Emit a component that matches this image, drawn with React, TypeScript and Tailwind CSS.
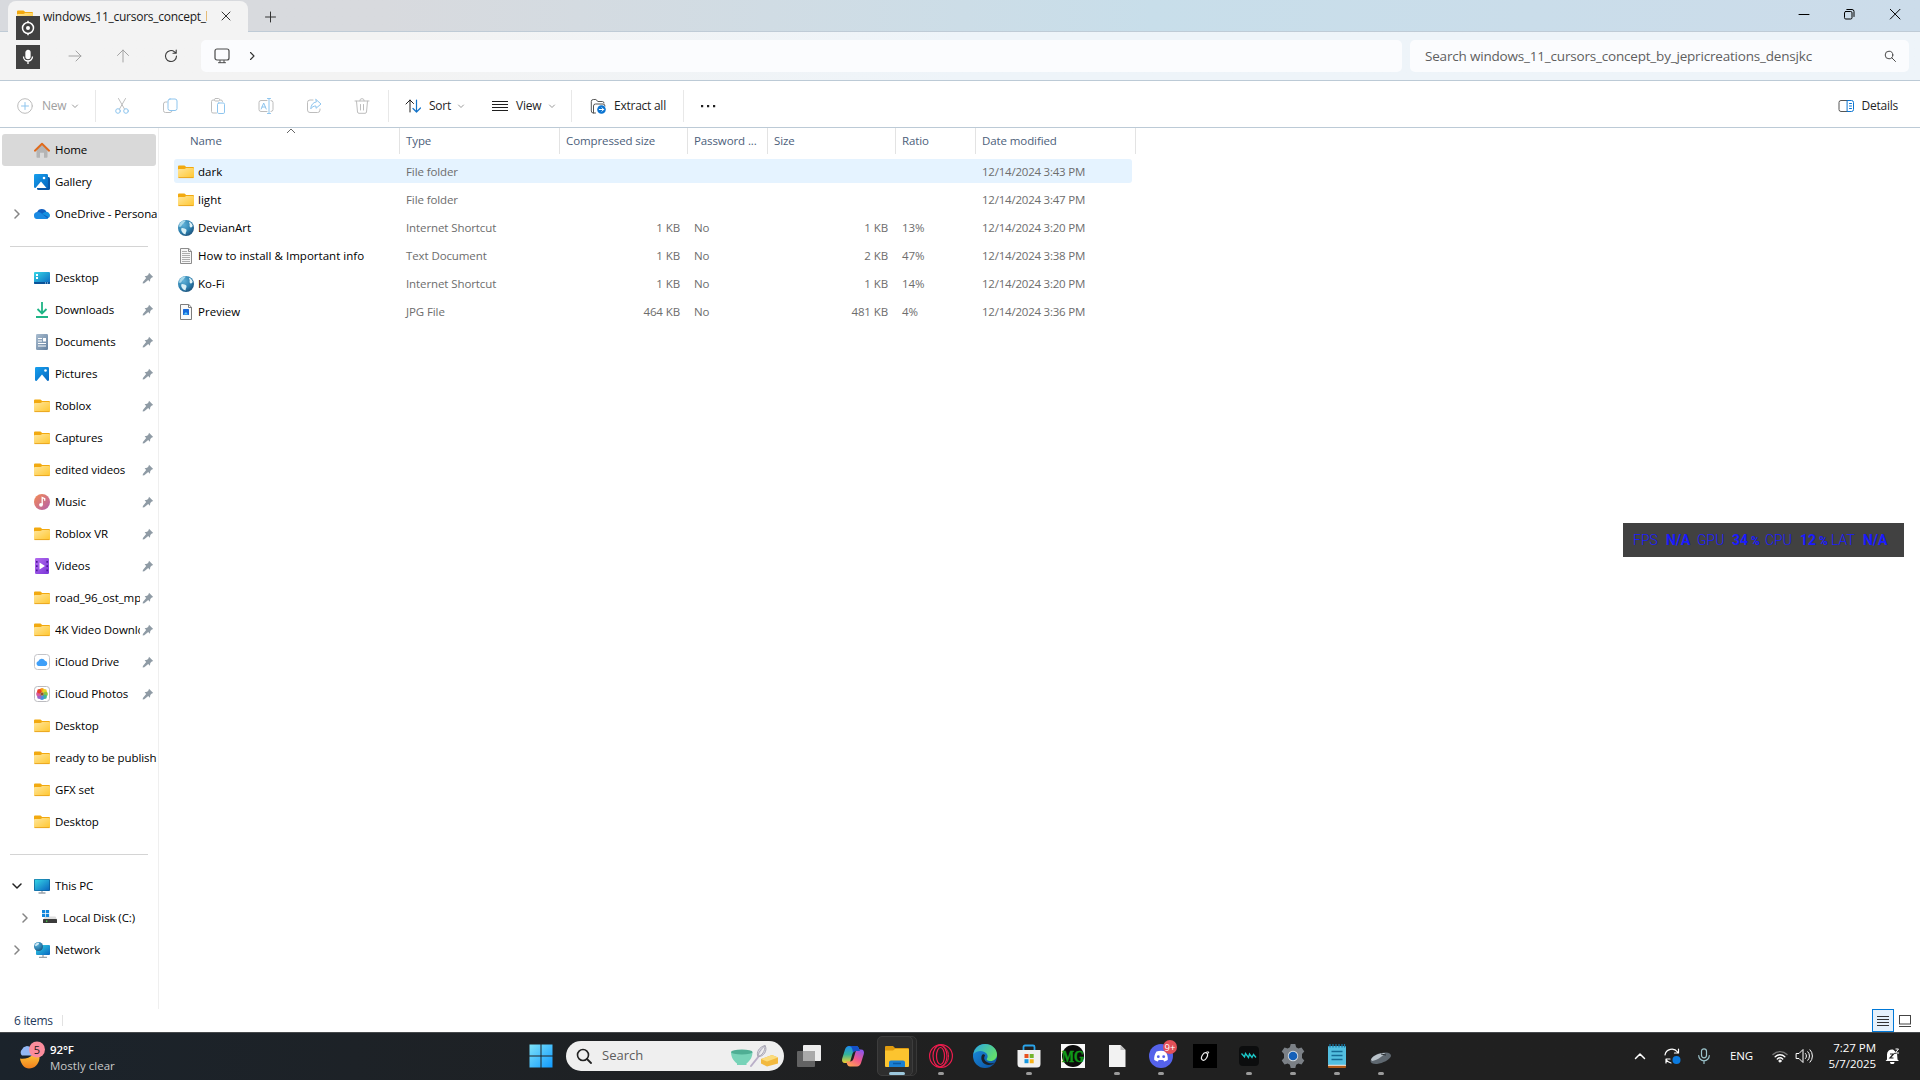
import type { ReactNode } from 'react'
import clsx from 'clsx'

type IconName =
  | 'home' | 'gallery' | 'onedrive' | 'desktop' | 'downloads' | 'documents' | 'pictures' | 'folder'
  | 'music' | 'videos' | 'icloud' | 'photos' | 'pc' | 'disk' | 'network' | 'globe' | 'text' | 'jpg'

interface NavItem {
  label: string
  icon: IconName
  pinned?: boolean
  chevron?: 'right' | 'down'
  nested?: boolean
  active?: boolean
}

interface FileItem {
  name: string
  icon: IconName
  type: string
  packed?: string
  password?: string
  size?: string
  ratio?: string
  date: string
}

const topItems: NavItem[] = [
  { label: 'Home', icon: 'home', active: true },
  { label: 'Gallery', icon: 'gallery' },
  { label: 'OneDrive - Persona', icon: 'onedrive', chevron: 'right' },
]

const quickItems: NavItem[] = [
  { label: 'Desktop', icon: 'desktop', pinned: true },
  { label: 'Downloads', icon: 'downloads', pinned: true },
  { label: 'Documents', icon: 'documents', pinned: true },
  { label: 'Pictures', icon: 'pictures', pinned: true },
  { label: 'Roblox', icon: 'folder', pinned: true },
  { label: 'Captures', icon: 'folder', pinned: true },
  { label: 'edited videos', icon: 'folder', pinned: true },
  { label: 'Music', icon: 'music', pinned: true },
  { label: 'Roblox VR', icon: 'folder', pinned: true },
  { label: 'Videos', icon: 'videos', pinned: true },
  { label: 'road_96_ost_mp', icon: 'folder', pinned: true },
  { label: '4K Video Downlo', icon: 'folder', pinned: true },
  { label: 'iCloud Drive', icon: 'icloud', pinned: true },
  { label: 'iCloud Photos', icon: 'photos', pinned: true },
  { label: 'Desktop', icon: 'folder' },
  { label: 'ready to be publish', icon: 'folder' },
  { label: 'GFX set', icon: 'folder' },
  { label: 'Desktop', icon: 'folder' },
]

const deviceItems: NavItem[] = [
  { label: 'This PC', icon: 'pc', chevron: 'down' },
  { label: 'Local Disk (C:)', icon: 'disk', chevron: 'right', nested: true },
  { label: 'Network', icon: 'network', chevron: 'right' },
]

const files: FileItem[] = [
  { name: 'dark', icon: 'folder', type: 'File folder', date: '12/14/2024 3:43 PM' },
  { name: 'light', icon: 'folder', type: 'File folder', date: '12/14/2024 3:47 PM' },
  { name: 'DevianArt', icon: 'globe', type: 'Internet Shortcut', packed: '1 KB', password: 'No', size: '1 KB', ratio: '13%', date: '12/14/2024 3:20 PM' },
  { name: 'How to install & Important info', icon: 'text', type: 'Text Document', packed: '1 KB', password: 'No', size: '2 KB', ratio: '47%', date: '12/14/2024 3:38 PM' },
  { name: 'Ko-Fi', icon: 'globe', type: 'Internet Shortcut', packed: '1 KB', password: 'No', size: '1 KB', ratio: '14%', date: '12/14/2024 3:20 PM' },
  { name: 'Preview', icon: 'jpg', type: 'JPG File', packed: '464 KB', password: 'No', size: '481 KB', ratio: '4%', date: '12/14/2024 3:36 PM' },
]

// Gradients shared by the icons below
function Gradients() {
  return (
    <svg width="0" height="0" className="absolute">
      <defs>
        <linearGradient id="folderFront" x1="0" y1="0" x2="1" y2="1">
          <stop offset="0" stopColor="#ffe69c" />
          <stop offset="1" stopColor="#ffc62e" />
        </linearGradient>
        <linearGradient id="screen" x1="0" y1="0" x2="1" y2="1">
          <stop offset="0" stopColor="#35d6e6" />
          <stop offset="1" stopColor="#0a66c0" />
        </linearGradient>
        <linearGradient id="blue" x1="0" y1="0" x2="1" y2="1">
          <stop offset="0" stopColor="#17a0ee" />
          <stop offset="1" stopColor="#0667c0" />
        </linearGradient>
        <linearGradient id="slate" x1="0" y1="0" x2="1" y2="1">
          <stop offset="0" stopColor="#a9bdd0" />
          <stop offset="1" stopColor="#64809f" />
        </linearGradient>
        <linearGradient id="music" x1="0" y1="0" x2="1" y2="1">
          <stop offset="0" stopColor="#f58b52" />
          <stop offset="1" stopColor="#b25fae" />
        </linearGradient>
        <linearGradient id="violet" x1="0" y1="0" x2="1" y2="1">
          <stop offset="0" stopColor="#b36bee" />
          <stop offset="1" stopColor="#7a35d8" />
        </linearGradient>
        <radialGradient id="earth" cx="0.35" cy="0.3" r="0.8">
          <stop offset="0" stopColor="#5fb2d8" />
          <stop offset="0.6" stopColor="#2c7fae" />
          <stop offset="1" stopColor="#1a4a72" />
        </radialGradient>
        <linearGradient id="start" x1="0" y1="0" x2="1" y2="1">
          <stop offset="0" stopColor="#7fe3f8" />
          <stop offset="1" stopColor="#109aff" />
        </linearGradient>
        <linearGradient id="copilotA" x1="0" y1="0" x2="0" y2="1">
          <stop offset="0" stopColor="#1d8bf0" />
          <stop offset="0.5" stopColor="#35b59a" />
          <stop offset="1" stopColor="#f2d22c" />
        </linearGradient>
        <linearGradient id="copilotB" x1="0.8" y1="0" x2="0.2" y2="1">
          <stop offset="0" stopColor="#8a56ee" />
          <stop offset="0.5" stopColor="#f0568c" />
          <stop offset="1" stopColor="#ffa552" />
        </linearGradient>
        <linearGradient id="edgeTop" x1="0" y1="0" x2="1" y2="0.6">
          <stop offset="0" stopColor="#2aa6e6" />
          <stop offset="1" stopColor="#63df6b" />
        </linearGradient>
        <linearGradient id="edgeBottom" x1="0" y1="0" x2="1" y2="1">
          <stop offset="0" stopColor="#1a8fe0" />
          <stop offset="1" stopColor="#0c4f9e" />
        </linearGradient>
        <linearGradient id="moon" x1="0" y1="0" x2="0" y2="1">
          <stop offset="0" stopColor="#ffc93c" />
          <stop offset="1" stopColor="#f07f1c" />
        </linearGradient>
      </defs>
    </svg>
  )
}

const iconShapes: Record<IconName, ReactNode> = {
  home: (
    <>
      <path d="M2.5 7.5 8 2.5l5.5 5V15a.8.8 0 0 1-.8.8H10v-5H6v5H3.3a.8.8 0 0 1-.8-.8z" fill="#b4b4b4" />
      <path d="M.9 8.7 8 1.7l7.1 7" fill="none" stroke="#e06a1b" strokeWidth="1.9" strokeLinecap="round" strokeLinejoin="round" />
    </>
  ),
  gallery: (
    <>
      <rect x="3" y="3" width="13" height="13" rx="1.5" fill="#0a58a8" />
      <rect x="0" y="0" width="14" height="14" rx="1.2" fill="url(#blue)" />
      <path d="M1.5 14 7 7.5l5.5 6.5z" fill="#fff" />
      <circle cx="10" cy="4" r="1.3" fill="#fff" />
    </>
  ),
  onedrive: (
    <>
      <path d="M3.5 13A3.5 3.5 0 0 1 3 6.2 5.2 5.2 0 0 1 12.6 6 3.6 3.6 0 0 1 12.5 13z" fill="#0f5fc0" />
      <path d="M3.5 13a3.4 3.4 0 0 1-.2-6.8c2-.4 3.5.6 5 1.9l5.7 4.7c-.5.2-1 .2-1.5.2z" fill="#1a8ae2" />
      <path d="M8 8c1.5-1.7 3-2 4.6-2a3.5 3.5 0 0 1 2.6 5.6L10.5 9z" fill="#1490df" />
    </>
  ),
  desktop: (
    <>
      <rect x="0" y="2" width="16" height="12" rx="1" fill="url(#screen)" />
      <path d="M0 12h16v1a1 1 0 0 1-1 1H1a1 1 0 0 1-1-1z" fill="#0a5298" />
      <path d="M2 4h2v2H2zM2 7h2v2H2z" fill="#fff" />
      <path d="M11 12.500h1v1h-1zM13 12.500h1v1h-1z" fill="#bfe6fa" />
    </>
  ),
  downloads: (
    <path d="M8 0v11M3.5 7 8 11.5 12.5 7M2 15h12" fill="none" stroke="#1fb486" strokeWidth="1.8" />
  ),
  documents: (
    <>
      <rect x="2" y="0" width="12" height="16" rx="1.2" fill="url(#slate)" />
      <path d="M4 4.5h4M4 7h4M4 9.5h8M4 12h8" stroke="#fff" strokeWidth="1.2" />
      <rect x="9" y="4" width="3" height="3.5" fill="#fff" />
    </>
  ),
  pictures: (
    <>
      <rect x="1" y="1" width="14" height="14" rx="1.2" fill="url(#blue)" />
      <path d="M2.5 15 8 8.5l5.5 6.5z" fill="#fff" />
      <circle cx="11.5" cy="4.5" r="1.3" fill="#fff" />
    </>
  ),
  folder: (
    <>
      <path d="M0 2.5A1 1 0 0 1 1 1.5h5.5l1.7 1.6H15a1 1 0 0 1 1 1V8H0z" fill="#f2a90f" />
      <path d="M0 6a.9.9 0 0 1 .9-.9H6.5L8.3 4H15a1 1 0 0 1 1 1v8a1 1 0 0 1-1 1H1a1 1 0 0 1-1-1z" fill="url(#folderFront)" />
      <path d="M.5 13.6h15" stroke="#e8a21c" strokeWidth=".9" />
    </>
  ),
  music: (
    <>
      <circle cx="8" cy="8" r="8" fill="url(#music)" />
      <circle cx="7" cy="10.8" r="1.9" fill="#fff" />
      <path d="M8.2 11V3.5l2.5 1.2v2" fill="none" stroke="#fff" strokeWidth="1.3" />
    </>
  ),
  videos: (
    <>
      <rect x="1" y="0" width="14" height="16" rx="1.2" fill="url(#violet)" />
      <path d="M5.5 4.5 11 8l-5.5 3.5z" fill="#fff" />
      <path d="M2 3h1.6v1.8H2zM2 7.2h1.6V9H2zM2 11.4h1.6v1.8H2zM12.4 3H14v1.8h-1.6zM12.4 7.2H14V9h-1.6zM12.4 11.4H14v1.8h-1.6z" fill="#4a1896" />
    </>
  ),
  icloud: (
    <>
      <rect x=".5" y=".5" width="15" height="15" rx="3" fill="#fff" stroke="#c4c4c8" />
      <path d="M4.5 12A2.4 2.4 0 0 1 4.3 7.3 3.6 3.6 0 0 1 11 6.8 2.7 2.7 0 0 1 11.5 12z" fill="#3f9ff8" />
    </>
  ),
  photos: (
    <>
      <rect x=".5" y=".5" width="15" height="15" rx="3" fill="#fff" stroke="#bcbcc0" />
      <circle cx="8" cy="4.300" r="2.200" fill="#f79a1c" />
      <circle cx="10.700" cy="5.300" r="2.200" fill="#e8d52a" />
      <circle cx="11.700" cy="8" r="2.200" fill="#8cc63f" />
      <circle cx="10.700" cy="10.700" r="2.200" fill="#3fb59a" />
      <circle cx="8" cy="11.700" r="2.200" fill="#4a8fe0" />
      <circle cx="5.300" cy="10.700" r="2.200" fill="#9a64c8" />
      <circle cx="4.300" cy="8" r="2.200" fill="#d95a9a" />
      <circle cx="5.300" cy="5.300" r="2.200" fill="#e8402c" />
      <circle cx="8" cy="8" r="1.800" fill="#8a5a2a" />
    </>
  ),
  pc: (
    <>
      <path d="M4.5 15h7M8 12v3" stroke="#9aa3ab" strokeWidth="1.3" />
      <rect x="0" y="1" width="16" height="12" rx="1" fill="#0b5a90" />
      <rect x=".7" y="1.6" width="14.6" height="10.8" rx=".5" fill="url(#screen)" />
    </>
  ),
  disk: (
    <>
      <path d="M3.5 6.5h10L15 9.5H1z" fill="#dedede" />
      <rect x="1" y="9" width="14" height="4" rx=".6" fill="#3b3b3b" />
      <rect x="4" y="10.5" width="1.3" height="1.3" fill="#4be04b" />
      <path d="M0 0h3.2v3.2H0zM3.9 0h3.2v3.2H3.9zM0 3.9h3.2v3.2H0zM3.9 3.9h3.2v3.2H3.9z" fill="#1286dc" />
    </>
  ),
  network: (
    <>
      <path d="M5 15.5h8M9 12v3" stroke="#9aa3ab" strokeWidth="1.3" />
      <rect x="2" y="3" width="14" height="10" rx="1" fill="url(#screen)" />
      <circle cx="4.5" cy="4.5" r="4.5" fill="url(#earth)" />
      <path d="M1 3c1-2 3-2.4 4-2 .5 1-1 2-2 2.5S1.5 5 1 3z" fill="#cfe8f4" />
    </>
  ),
  globe: (
    <>
      <circle cx="8" cy="8" r="8" fill="url(#earth)" />
      <path d="M2.5 2.5C4 1 6 .3 7.5.6c0 1.5-1.4 1.7-2 2.9-.4 1-1.6 1-2 2.5-.3 1-1.600 1-2.500.4.2-1.500.7-2.900 1.500-3.900z" fill="#a7d8ea" />
      <path d="M3.500 8.200c1.500-.4 4 .6 5 1.600.3 1.800-1 2.500-1 4.700-1.800-.2-2.700-1.500-3.500-2.700-.8-1-1-2.800-.5-3.600z" fill="#d8f0f6" />
      <path d="M11 1.800c1.800.6 3 2 3.700 4-.5 1-1 2-2 1.700-1.200-.6-1.300-1.700-1-2.700.2-1.100-.8-1.700-.7-3z" fill="#e3f4f8" />
    </>
  ),
  text: (
    <>
      <path d="M2.5.5h8.300l2.700 2.700v12.300h-11z" fill="#f7f7f7" stroke="#8c8c8c" />
      <path d="M10.500.5v3h3" fill="none" stroke="#8c8c8c" />
      <path d="M4 3.500h5M4 5.500h8M4 7.500h8M4 9.500h8M4 11.500h8M4 13.500h8" stroke="#a5a5a5" strokeWidth=".9" />
    </>
  ),
  jpg: (
    <>
      <path d="M2.500.5h8.300l2.700 2.700v12.300h-11z" fill="#f9f9f9" stroke="#7d7d7d" />
      <path d="M10.500.5v3h3" fill="none" stroke="#7d7d7d" />
      <rect x="5" y="5" width="6" height="6" rx=".6" fill="#1668d8" />
      <path d="M5.500 10.500 8 8l2 2.500z" fill="#58c7f8" />
    </>
  ),
}

function FileIcon({ name }: { name: IconName }) {
  return (
    <svg width="16" height="16" viewBox="0 0 16 16" className="shrink-0">
      {iconShapes[name]}
    </svg>
  )
}

// Thin line icon, drawn at its pixel size
function Line({ children, size = 16, className }: { children: ReactNode; size?: number; className?: string }) {
  return (
    <svg
      width={size}
      height={size}
      viewBox={`0 0 ${size} ${size}`}
      fill="none"
      stroke="currentColor"
      strokeLinecap="round"
      strokeLinejoin="round"
      className={clsx('shrink-0', className)}
    >
      {children}
    </svg>
  )
}

function Caret({ className }: { className?: string }) {
  return (
    <Line size={8} className={clsx('text-[#9a9a9a]', className)}>
      <path d="M1.500 3 4 5.500 6.500 3" />
    </Line>
  )
}

function TitleBar() {
  return (
    <div className="flex h-8 bg-linear-to-r from-[#d8dade] from-20% via-[#c8deea] via-60% to-[#ccdcea] border-b border-[#bfcbd6]">
      <div className="relative ml-2 mt-px flex h-8 w-60 items-center rounded-t-lg bg-[#f3f3f3]">
        <div className="ml-[9px] flex w-[26px]">
          <FileIcon name="folder" />
        </div>
        <div className="w-[164px] overflow-hidden whitespace-nowrap text-[12px] font-medium tracking-[-0.27px] text-[#1a1a1a]">
          windows_11_cursors_concept_by
        </div>
        <Line size={10} className="-mt-0.5 ml-[14px] text-[#333]">
          <path d="M1 1l8 8M9 1 1 9" />
        </Line>
        {/* Capture overlay badges */}
        <div className="absolute left-2 top-[15px] flex flex-col gap-[5px]">
          <div className="flex h-6 w-6 items-center justify-center bg-[#414141]">
            <svg width="16" height="16" viewBox="0 0 16 16" fill="none" stroke="#fff" strokeWidth="1.5">
              <circle cx="8" cy="8" r="5.5" />
              <circle cx="8" cy="8" r="2" fill="#fff" stroke="none" />
              <path d="M8 .8v2M8 13.2v2" />
            </svg>
          </div>
          <div className="flex h-6 w-6 items-center justify-center bg-[#414141]">
            <svg width="16" height="16" viewBox="0 0 16 16" fill="none" stroke="#fff" strokeWidth="1.3">
              <rect x="6" y="1.5" width="4" height="8" rx="2" fill="#fff" />
              <path d="M3.5 7.5a4.5 4.5 0 0 0 9 0M8 12v3" />
            </svg>
          </div>
        </div>
      </div>
      <Line size={12} className="ml-4 mt-[11px] text-[#333]">
        <path d="M6.500 1v10M1.500 6h10" />
      </Line>
      <div className="ml-auto mr-5 mt-[9px] flex text-black">
        <Line size={10} className="mr-[35px] overflow-visible">
          <path d="M0 5.500h10" />
        </Line>
        <Line size={10} className="mr-9 overflow-visible">
          <rect x=".5" y="2.500" width="7.500" height="7.500" rx="1.300" />
          <path d="M2.800.5H8a2 2 0 0 1 2 2v5" />
        </Line>
        <Line size={10} className="overflow-visible">
          <path d="M.3.3l9.700 9.700M10 .3.3 10" />
        </Line>
      </div>
    </div>
  )
}

function AddressBar() {
  return (
    <div className="flex h-[49px] items-center border-b border-[#bccad6] bg-linear-to-r from-[#f3f3f3] from-20% to-[#eef4f9] to-50% pl-[67px] pr-[11px]">
      <Line className="text-[#a3a3a3]">
        <path d="M2 8h12M9 3l5 5-5 5" />
      </Line>
      <Line className="ml-8 text-[#a3a3a3]">
        <path d="M8 14V2M2.500 7.500 8 2l5.500 5.500" />
      </Line>
      <Line className="ml-8 text-[#3c3c3c]">
        <path d="M13.500 8A5.500 5.500 0 1 1 11.500 3.800L13 5M13.200 2v3.200h-3.200" strokeWidth="1.100" />
      </Line>
      <div className="ml-[22px] flex h-8 w-[1201px] items-center rounded-[5px] bg-[#fbfcfe] pl-[13px]">
        <Line className="text-[#4a4a4a]">
          <rect x="1" y="1" width="14" height="11" rx="2" strokeWidth="1.200" />
          <path d="M6 12.500v2M10 12.500v2M4.500 14.700h7" />
        </Line>
        <Line size={10} className="ml-[17px] text-[#333]">
          <path d="M3.500 1.500 7 5 3.500 8.500" strokeWidth="1.100" />
        </Line>
      </div>
      <div className="ml-2 flex h-8 flex-1 items-center rounded-[5px] bg-[#fbfcfe] pl-[15px] pr-3">
        <span className="whitespace-nowrap text-[13.500px] tracking-[-0.19px] text-[#5f5f5f]">
          Search windows_11_cursors_concept_by_jepricreations_densjkc
        </span>
        <Line size={14} className="ml-auto text-[#4a4a4a]">
          <circle cx="6" cy="6" r="3.800" />
          <path d="M8.800 8.800l3.700 3.700" />
        </Line>
      </div>
    </div>
  )
}

function Divider() {
  return <div className="h-8 w-px shrink-0 bg-[#e8e8e8]" />
}

function Toolbar() {
  return (
    <div className="flex h-[47px] items-center border-b border-[#bccad6] bg-white pl-[17px] pt-[3px] text-[12px] tracking-[-0.25px] text-[#1f1f1f]">
      <div className="flex w-[78px] items-center text-[#a0a0a0]">
        <Line className="text-[#bdbdbd]">
          <circle cx="8" cy="8" r="7.300" />
          <path d="M8 4.500v7M4.500 8h7" stroke="#8ec5ee" />
        </Line>
        <span className="ml-[9px] w-[29px]">New</span>
        <Caret />
      </div>
      <Divider />
      <div className="flex w-[292px] items-center gap-8 pl-[18px] text-[#bdbdbd]">
        <Line>
          <path d="M4.500.5l6 10.500M11.500.5l-6 10.500" />
          <circle cx="4" cy="13" r="2.300" stroke="#8ec5ee" />
          <circle cx="12" cy="13" r="2.300" stroke="#8ec5ee" />
        </Line>
        <Line>
          <path d="M5 4H3.500a2 2 0 0 0-2 2v6.500a2 2 0 0 0 2 2H8a2 2 0 0 0 2-2" />
          <rect x="6" y="1" width="9" height="11.500" rx="2" stroke="#8ec5ee" />
        </Line>
        <Line>
          <path d="M6.500 15H3a1.500 1.500 0 0 1-1.500-1.500v-10A1.500 1.500 0 0 1 3 2h1M10 2h1a1.500 1.500 0 0 1 1.500 1.500" />
          <rect x="4.500" y=".5" width="5" height="2.500" rx="1" />
          <rect x="7.500" y="5" width="7" height="10.500" rx="1.300" stroke="#8ec5ee" />
        </Line>
        <Line>
          <path d="M9 2.500H3a2 2 0 0 0-2 2v7a2 2 0 0 0 2 2h6M13 2.500a2 2 0 0 1 2 2v7a2 2 0 0 1-2 2" />
          <path d="M9.500.5h3M11 .5v15M9.500 15.500h3M3.200 11 5.700 5l2.500 6M4 9h3.300" stroke="#8ec5ee" />
        </Line>
        <Line>
          <path d="M7 2H4a2.500 2.500 0 0 0-2.500 2.500v7.500A2.500 2.500 0 0 0 4 14.500h7.500A2.500 2.500 0 0 0 14 12v-1" />
          <path d="M10 1.500 15 6l-5 4.300V8C7.500 8 6 9 4.800 10.800 5 7 7 4.400 10 4z" stroke="#8ec5ee" />
        </Line>
        <Line>
          <path d="M1 3h14M5.800 2.800a2.200 2.200 0 0 1 4.400 0M2.500 3.200l1 10.800a1.500 1.500 0 0 0 1.500 1.300h6a1.500 1.500 0 0 0 1.500-1.300l1-10.800M6.500 6.500v5.500M9.500 6.500v5.500" />
        </Line>
      </div>
      <Divider />
      <div className="flex w-[182px] items-center pl-4">
        <Line>
          <path d="M5 14V2M1 6l4-4 3.500 3.500" />
          <path d="M11.500 2v12M8 10.500l3.500 3.500 4-4" stroke="#1473c8" strokeWidth="1.200" />
        </Line>
        <span className="ml-2 w-7">Sort</span>
        <Caret />
        <Line className="ml-[27px] overflow-visible">
          <path d="M0 3.500h16M0 6.500h16M0 9.500h16M0 12.500h16" strokeLinecap="butt" />
        </Line>
        <span className="ml-2 w-8">View</span>
        <Caret />
      </div>
      <Divider />
      <div className="flex w-[111px] items-center pl-[18px]">
        <Line>
          <path d="M5.500 15H3.300a2 2 0 0 1-2-2V3.500a2 2 0 0 1 2-2h2.500L8 3.500h4.500A1.500 1.500 0 0 1 14 5M3.500 15V8a2 2 0 0 1 2-2H13a2 2 0 0 1 2 2" stroke="#555" />
          <circle cx="11.500" cy="11.500" r="4.300" fill="#0b74d1" stroke="none" />
          <path d="M9.300 11.500h4.200M12 9.800l1.700 1.700L12 13.200" stroke="#fff" />
        </Line>
        <span className="ml-2 whitespace-nowrap">Extract all</span>
      </div>
      <Divider />
      <svg width="16" height="4" viewBox="0 0 16 4" className="ml-4">
        <path d="M1 1h2.200v2.200H1zM7 1h2.200v2.200H7zM13 1h2.200v2.200H13z" fill="#1f1f1f" />
      </svg>
      <div className="ml-auto mr-[22px] flex items-center gap-2">
        <Line>
          <path d="M10 2.500H3a2 2 0 0 0-2 2v7a2 2 0 0 0 2 2h7" stroke="#555" />
          <path d="M9.500 2.500H13.500a2 2 0 0 1 2 2v7a2 2 0 0 1-2 2H9.500zM11.500 5.500h2M11.500 8h2M11.500 10.500h2" stroke="#0b74d1" />
        </Line>
        <span className="whitespace-nowrap">Details</span>
      </div>
    </div>
  )
}

function NavRow({ item }: { item: NavItem }) {
  return (
    <div className={clsx('mx-0.5 flex h-8 items-center rounded-[3px]', item.active && 'bg-[#d9d9d9]')}>
      <div className={clsx('flex shrink-0', item.nested ? 'w-10 pl-[18px]' : 'w-8 pl-2.5')}>
        {item.chevron && (
          <Line size={10} className={item.chevron === 'down' ? 'text-[#222]' : 'text-[#858585]'}>
            <path d={item.chevron === 'down' ? 'M1 3l4 4 4-4' : 'M3 1l4 4-4 4'} strokeWidth="1.500" />
          </Line>
        )}
      </div>
      <FileIcon name={item.icon} />
      <span className={clsx('ml-[5px] shrink-0 overflow-hidden whitespace-nowrap leading-5', item.pinned ? 'w-[85px]' : 'w-[102px]')}>
        {item.label}
      </span>
      {item.pinned && (
        <svg width="12" height="12" viewBox="0 0 12 12" className="ml-[2px] shrink-0">
          <path d="M7 .8 11.200 5l-1.400.5L8.300 7l-.4 2.700L6.200 8 2.300 11.300.7 11.500.9 9.900 4.200 6 2.600 4.300l2.600-.5L6.600 2.200z" fill="#8f9ba5" />
        </svg>
      )}
    </div>
  )
}

function Rule() {
  return (
    <div className="flex h-8 items-center pl-2.5">
      <div className="h-px w-[138px] bg-[#d4d4d4]" />
    </div>
  )
}

function Sidebar() {
  return (
    <div className="h-[881px] w-[159px] shrink-0 overflow-hidden border-r border-[#efefef] pt-1.5 text-[11.5px] tracking-[-0.1px] text-black">
      {topItems.map(item => (
        <NavRow key={item.label} item={item} />
      ))}
      <Rule />
      {quickItems.map((item, i) => (
        <NavRow key={i} item={item} />
      ))}
      <Rule />
      {deviceItems.map(item => (
        <NavRow key={item.label} item={item} />
      ))}
    </div>
  )
}

const columns = 'grid grid-cols-[226px_160px_128px_80px_128px_80px_160px]'

function FileList() {
  return (
    <div className="flex-1 pl-[15px] text-[11.5px] tracking-[-0.1px]">
      <div className={clsx(columns, 'relative h-[31px] w-[962px] text-[#4c607a]')}>
        {['Name', 'Type', 'Compressed size', 'Password ...', 'Size', 'Ratio', 'Date modified'].map((title, i) => (
          <div key={title} className={clsx('h-[26px] whitespace-nowrap border-r border-[#e3e3e3] pt-[5px] leading-4', i === 0 ? 'pl-4' : 'pl-1.5')}>
            {title}
          </div>
        ))}
        <svg width="10" height="6" viewBox="0 0 10 6" className="absolute left-[112px] top-0">
          <path d="M1 5l4-4 4 4" fill="none" stroke="#666" />
        </svg>
      </div>
      <div className="flex flex-col gap-1">
        {files.map((file, i) => (
          <div key={file.name} className={clsx(columns, 'h-6 w-[958px] items-center rounded-[3px] pt-px text-[#6d6d6d]', i === 0 && 'bg-[#e5f3ff]')}>
            <div className="flex items-center gap-1 whitespace-nowrap pl-1 tracking-[0.03px] text-black">
              <FileIcon name={file.icon} />
              {file.name}
            </div>
            <div className="pl-1.5">{file.type}</div>
            <div className="pr-2 text-right">{file.packed}</div>
            <div className="pl-1.5">{file.password}</div>
            <div className="pr-2 text-right">{file.size}</div>
            <div className="pl-1.5">{file.ratio}</div>
            <div className="whitespace-nowrap pl-1.5 tracking-[-0.22px]">{file.date}</div>
          </div>
        ))}
      </div>
    </div>
  )
}

function StatusBar() {
  return (
    <div className="flex h-[23px] items-center pl-3.5 text-[12px] tracking-[-0.3px] text-[#1e395b]">
      <span className="w-12">6 items</span>
      <div className="h-[11px] w-px bg-[#e2e2e2]" />
      <div className="ml-auto flex h-[23px] w-[22px] items-center justify-center border border-[#0078d7] bg-[#e5f1fb]">
        <svg width="12" height="10" viewBox="0 0 12 10" stroke="#333">
          <path d="M0 .5h12M0 3.500h12M0 6.500h12M0 9.500h12" />
        </svg>
      </div>
      <svg width="12" height="12" viewBox="0 0 12 12" fill="none" stroke="#444" className="ml-[5px] mr-[9px]">
        <rect x=".5" y=".5" width="11" height="8.500" />
        <path d="M0 11.500h12" />
      </svg>
    </div>
  )
}

function PerfOverlay() {
  const stats = [
    { label: 'FPS', value: 'N/A', unit: '', labelWidth: 'w-[33px]', valueWidth: 'w-[31px]' },
    { label: 'GPU', value: '34', unit: '%', labelWidth: 'w-[35px]', valueWidth: 'w-[33px]' },
    { label: 'CPU', value: '12', unit: '%', labelWidth: 'w-[35px]', valueWidth: 'w-[31px]' },
    { label: 'LAT', value: 'N/A', unit: '', labelWidth: 'w-[32px]', valueWidth: 'w-[25px]' },
  ]
  return (
    <div className="absolute left-[1623px] top-[523px] flex h-[34px] w-[281px] items-center whitespace-nowrap bg-[#414141] pl-2.5 font-[Roboto,sans-serif] text-[14px] text-[#1a1aff]">
      {stats.map(s => (
        <div key={s.label} className="flex items-baseline">
          <span className={clsx('font-light', s.labelWidth)}>{s.label}</span>
          <span className={clsx('font-bold', s.valueWidth)}>
            {s.value}
            {s.unit && <span className="ml-[3px] text-[12px]">{s.unit}</span>}
          </span>
        </div>
      ))}
    </div>
  )
}

function TaskIcon({ children, running }: { children: ReactNode; running?: boolean }) {
  return (
    <div className="relative flex h-full w-11 items-center justify-center">
      <svg width="24" height="24" viewBox="0 0 24 24" className="overflow-visible">
        {children}
      </svg>
      {running && <div className="absolute bottom-1 left-[19px] h-[3px] w-1.5 rounded-full bg-[#9a9a9a]" />}
    </div>
  )
}

function Taskbar() {
  return (
    <div className="relative flex h-12 items-center border-t border-[#46494c] bg-linear-to-r from-[#1b232b] via-[#202020] via-50% to-[#202020] pb-px text-white">
      {/* Weather */}
      <div className="flex w-[529px] items-center pl-[17px]">
        <svg width="30" height="30" viewBox="0 0 30 30">
          <path d="M3 17.500c4 .8 10-.3 13-4.500 3.500-3 7 .5 6.500 4.500-.8 6-5 10-10.500 10-4.500 0-8-4-9-10z" fill="url(#moon)" />
          <path d="M5 14.500a4 4 0 0 1 0-6 5 5 0 0 1 9-1l1 7z" fill="#94b8f4" />
          <circle cx="20" cy="8.500" r="8" fill="#fb8c9c" />
          <text x="20" y="12.500" textAnchor="middle" fontSize="11" fill="#1b1b1b" fontFamily="Open Sans">5</text>
        </svg>
        <div className="ml-[3px] whitespace-nowrap pt-[3px] text-[11.5px] font-semibold leading-4 tracking-[-0.1px]">
          <div>92°F</div>
          <div className="font-medium tracking-[0.03px] text-[#c8c8c8]">Mostly clear</div>
        </div>
      </div>
      <svg width="24" height="24" viewBox="0 0 24 24" className="shrink-0">
        <path d="M.5.500H11.500V11.500H.5zM12.500.500h11v11h-11zM.5 12.500h11v11H.5zM12.500 12.500h11v11h-11z" fill="url(#start)" />
      </svg>
      <div className="ml-[13px] flex h-[30px] w-[218px] items-center rounded-full bg-[#efefef] pl-2.5 pr-1">
        <Line className="text-[#222]">
          <circle cx="7" cy="7" r="5.500" strokeWidth="1.600" />
          <path d="M11 11l4 4" strokeWidth="1.800" />
        </Line>
        <span className="ml-2.5 text-[13px] text-[#5c5c5c]">Search</span>
        <svg width="50" height="24" viewBox="0 0 50 24" className="ml-auto">
          <path d="M1 8h21.500c0 5-2.500 9-6 11.500v1.500H7v-1.500C3.500 17 1 13 1 8z" fill="#78d3b8" />
          <ellipse cx="11.800" cy="8" rx="10.800" ry="2.400" fill="#4fae94" />
          <path d="M21 22l8-10" stroke="#b9aec8" strokeWidth="2" strokeLinecap="round" />
          <path d="M28 12.500c-2-4 1-9.500 7-11 3 5-1.500 11.500-7 11zM28 12.500c0-4 3-7 7-11M28 12.500c4-1 7-5 7-11" fill="#dddce4" stroke="#a9a7b5" strokeWidth="1" />
          <path d="M31 15l11-4 6 2.500v6L37 22.500l-6-3z" fill="#f2b93f" />
          <path d="M31 15l11-4 6 2.500-11 4z" fill="#fbdc7c" />
        </svg>
      </div>
      <div className="ml-[3px] flex h-full">
        {/* Task view */}
        <TaskIcon>
          <rect x="6" y="1" width="18" height="16" rx="1" fill="#ededed" />
          <rect x="0" y="7" width="18" height="16" rx="1" fill="#6e6e6e" fillOpacity=".85" />
          <rect x="6" y="7" width="12" height="10" fill="#a9a9a9" />
        </TaskIcon>
        {/* Copilot */}
        <TaskIcon>
          <path d="M8 2h7c2 0 2.700 1.500 3.200 3.200L19 7h-4c-2 0-3 1-3.600 3L9.500 16.500C9 18 8 19 6.500 19H4c-2.500 0-3.500-2-2.800-4.500L4 5.500C4.800 3.300 6 2 8 2z" fill="url(#copilotA)" />
          <path d="M16 22.500H9c-2 0-2.700-1.500-3.200-3.200L5 17.500h4c2 0 3-1 3.600-3L14.500 8C15 6.500 16 5.500 17.500 5.500H20c2.500 0 3.500 2 2.800 4.500L20 19c-.8 2.200-2 3.500-4 3.500z" fill="url(#copilotB)" />
          <path d="M8 2h7c2 0 2.700 1.500 3.200 3.200L19 7h-4c-1.500 0-2.300.6-3 1.500C11.500 5 11 2.500 8 2z" fill="#1450c8" />
        </TaskIcon>
        {/* File Explorer */}
        <div className="relative flex h-full w-11 items-center justify-center">
          <div className="absolute left-1.5 top-[3px] h-10 w-[36px] rounded-[5px] border border-[#383838] bg-[#272727]" />
          <div className="absolute left-0.5 top-[3px] h-10 w-9 rounded-[5px] border border-[#3d3d3d] bg-[#2e2e2e]" />
          <svg width="24" height="24" viewBox="0 0 24 24" className="relative">
            <path d="M0 3a1 1 0 0 1 1-1h7l2 2h13a1 1 0 0 1 1 1v6H0z" fill="#e09b0e" />
            <path d="M0 6.500h8L10 5h13a1 1 0 0 1 1 1v16a1 1 0 0 1-1 1H1a1 1 0 0 1-1-1z" fill="#fcc42f" />
            <path d="M4 23v-4.500a2 2 0 0 1 2-2h12a2 2 0 0 1 2 2V23z" fill="#1a7fd2" />
            <path d="M8 19.500h8" stroke="#0b5aa4" strokeWidth="1.500" />
          </svg>
          <div className="absolute bottom-1 left-[14px] h-[3px] w-4 rounded-full bg-[#9cc7dc]" />
        </div>
        {/* Opera GX */}
        <TaskIcon running>
          <circle cx="12" cy="12" r="11.400" fill="none" stroke="#ee1c4e" strokeWidth="1.200" />
          <ellipse cx="11" cy="12" rx="7" ry="10.800" fill="none" stroke="#ee1c4e" strokeWidth="1.200" />
          <ellipse cx="11.500" cy="12" rx="4" ry="8.500" fill="none" stroke="#ee1c4e" strokeWidth="1.200" />
          <path d="M14 2c4 2.500 5.500 6 5.500 10s-1.500 7.500-5.500 10" fill="none" stroke="#ee1c4e" />
        </TaskIcon>
        {/* Edge */}
        <TaskIcon>
          <circle cx="12" cy="12" r="12" fill="url(#edgeBottom)" />
          <path d="M.5 10C1.500 4 6 0 12 0c7 0 12 5 12 10.500 0 4-3 6.500-6.500 6.500-3 0-4.500-1.200-3.500-2.500 1-1.500.8-3.500-.5-5C10.500 6 4 6 .5 10z" fill="url(#edgeTop)" />
          <path d="M9 11c-2 4 .5 9.500 6 10 3 .2 5-.6 7-2.500-1 .5-6 2-9.500-1.500-1.500-1.500-1.800-3.500-.5-5.500 0-1-2-2-3-.5z" fill="#1b2128" />
        </TaskIcon>
        {/* Store */}
        <TaskIcon running>
          <path d="M6.500 6V3a1.500 1.500 0 0 1 1.500-1.500h8A1.500 1.500 0 0 1 17.500 3v3" fill="none" stroke="#2aa4ea" strokeWidth="1.800" />
          <path d="M.5 6h23v14a3.500 3.500 0 0 1-3.500 3.500H4A3.500 3.500 0 0 1 .5 20z" fill="#f0f0f0" />
          <path d="M7.500 10h4v4h-4z" fill="#e8501f" />
          <path d="M12.700 10h4v4h-4z" fill="#73b32c" />
          <path d="M7.500 15.200h4v4h-4z" fill="#1597e0" />
          <path d="M12.700 15.200h4v4h-4z" fill="#f7b219" />
        </TaskIcon>
        <TaskIcon>
          <rect width="24" height="24" fill="#fafafa" />
          <circle cx="12" cy="12" r="11" fill="#0b0b0b" />
          <text x="12" y="17.500" textAnchor="middle" fontSize="16" fontWeight="700" fill="#109a18" stroke="#109a18" strokeWidth=".5" textLength="22" lengthAdjust="spacingAndGlyphs" fontFamily="Liberation Serif">MG</text>
        </TaskIcon>
        <TaskIcon running>
          <path d="M4 1h11.500l5 5v17H4z" fill="#f2f2f2" />
          <path d="M15.500 1l5 5h-5z" fill="#bdbdbd" />
        </TaskIcon>
        {/* Discord */}
        <TaskIcon running>
          <circle cx="12" cy="12" r="12" fill="#5562ea" />
          <path d="M7.500 7.500c3-1 6-1 9 0 1.800 2.700 2.500 5.500 2.300 8.300-1.200 1-2.300 1.400-3.600 1.700l-.9-1.500h-4.600l-.9 1.500c-1.300-.3-2.400-.7-3.600-1.700-.2-2.800.5-5.600 2.300-8.300z" fill="#fff" />
          <circle cx="9.300" cy="12.700" r="1.400" fill="#5562ea" />
          <circle cx="14.700" cy="12.700" r="1.400" fill="#5562ea" />
          <circle cx="21" cy="3" r="7" fill="#e25058" />
          <text x="21" y="6.500" textAnchor="middle" fontSize="9.500" fill="#fff" fontFamily="Open Sans">9+</text>
        </TaskIcon>
        <TaskIcon>
          <rect width="24" height="24" fill="#000" />
          <ellipse cx="11.500" cy="12.500" rx="2.500" ry="4" transform="rotate(30 11.500 12.500)" fill="none" stroke="#eee" strokeWidth="1.200" />
          <path d="M12.500 8.500l3-.8M14.500 10l1.500-2" stroke="#eee" fill="none" />
        </TaskIcon>
        <TaskIcon running>
          <rect x="2" y="2" width="20" height="20" rx="4" fill="#0c0d0e" />
          <path d="M4.500 9.500l3 3.500 1-3.500 3 4 1-3.500 2.500 3.500 1.500-3 2.500 3" fill="none" stroke="#1cc8c8" strokeWidth="1.300" />
        </TaskIcon>
        {/* Settings */}
        <TaskIcon running>
          <path d="M9.700 0h4.600l.8 3.200 2.200 1.200L20.500 3.500l2.800 4L21 10v4l2.300 2.500-2.800 4-3.200-.9-2.200 1.200-.8 3.200H9.700l-.8-3.200-2.200-1.200-3.200.9-2.800-4L3 14v-4L.7 7.500l2.800-4 3.200.9 2.200-1.200z" fill="#7b8086" />
          <circle cx="12" cy="12" r="5.200" fill="#d8dde2" />
          <circle cx="12" cy="12" r="4.300" fill="#1560b8" />
        </TaskIcon>
        {/* Notepad */}
        <TaskIcon running>
          <rect x="3" y="20" width="18" height="4" rx="1" fill="#b05a18" />
          <rect x="3" y="2" width="18" height="19" rx="1" fill="#53bfe0" />
          <path d="M5 0v3.500M8 0v3.500M11 0v3.500M14 0v3.500M17 0v3.500M19.500 0v3.500" stroke="#167aa8" strokeWidth="1.200" />
          <path d="M6.500 7.500h11M6.500 11.500h11M6.500 15.500h11" stroke="#156b96" strokeWidth="1.400" />
          <path d="M3 21.300h18" stroke="#f0f0f0" />
        </TaskIcon>
        <TaskIcon running>
          <path d="M1.500 17C2 12 10 8.500 17 8.500c3 0 5 1.500 5 3.500-1.500 4-8 7-14 8-4 .3-6.500-1-6.500-3z" fill="#5f6870" />
          <path d="M2 15.500C4 11.500 10 9 16 9c-1.500 2.500-7 7-13 8z" fill="#b9c2c9" />
          <path d="M12 10l5 1" stroke="#2a2f33" />
        </TaskIcon>
      </div>
      {/* System tray */}
      <div className="ml-auto flex items-center">
        <Line size={12}>
          <path d="M1.500 8.500 6 4l4.500 4.500" strokeWidth="1.500" />
        </Line>
        <Line size={17} className="ml-[18px]">
          <path d="M1 7a7 7 0 0 1 12.500-3M14.500 1v4h-4M2 11.500A7 7 0 0 0 7 15M2 15v-4h4" strokeWidth="1.200" />
          <circle cx="12.500" cy="12" r="4" fill="#0b7be0" stroke="none" />
        </Line>
        <Line className="ml-[15px] text-[#9cc4cc]">
          <rect x="5.500" y=".8" width="5" height="9" rx="2.500" strokeWidth="1.200" />
          <path d="M2.700 7.500a5.300 5.300 0 0 0 10.600 0M8 12.800V15.500" strokeWidth="1.200" />
        </Line>
        <span className="ml-[18px] w-6 text-[11.5px] tracking-[-0.1px]">ENG</span>
        <Line className="ml-[18px]">
          <path d="M1 6.500a10 10 0 0 1 14 0" stroke="#777" strokeWidth="1.400" />
          <path d="M3.200 8.700a7 7 0 0 1 9.600 0M5.300 11a4 4 0 0 1 5.400 0" strokeWidth="1.400" />
          <circle cx="8" cy="13" r="1.100" fill="#fff" />
        </Line>
        <Line className="ml-2 overflow-visible">
          <path d="M.5 5.500H3l4-4v13l-4-4H.5zM9.500 5.500a3.500 3.500 0 0 1 0 5M11.800 3.700a6 6 0 0 1 0 8.600M14 1.800a8.800 8.800 0 0 1 0 12.400" />
        </Line>
        <div className="ml-3 w-[52px] whitespace-nowrap text-right text-[11.5px] leading-4 tracking-[-0.05px]">
          <div>7:27 PM</div>
          <div>5/7/2025</div>
        </div>
        <svg width="15" height="16" viewBox="0 0 15 16" className="ml-[9px] mr-5">
          <path d="M2 11.500V6.500a5 5 0 0 1 6-5l4 3.500.5 6.500L14 13H.5zM5 14h4.500a2.200 2.200 0 0 1-4.500 0z" fill="#fff" />
          <path d="M5 6h3.500L5 10h3.500M10 1.500h3.500l-3.500 4h3.500" fill="none" stroke="#202020" strokeWidth="1.200" />
          <path d="M10.500 1h3l-3 4h3.500" fill="none" stroke="#fff" />
        </svg>
      </div>
    </div>
  )
}

export default function App() {
  return (
    <div className="relative flex h-[1080px] w-[1920px] flex-col overflow-hidden bg-white font-['Open_Sans','Noto_Sans',sans-serif]">
      <Gradients />
      <TitleBar />
      <AddressBar />
      <Toolbar />
      <div className="flex h-[881px]">
        <Sidebar />
        <FileList />
      </div>
      <StatusBar />
      <PerfOverlay />
      <Taskbar />
    </div>
  )
}
